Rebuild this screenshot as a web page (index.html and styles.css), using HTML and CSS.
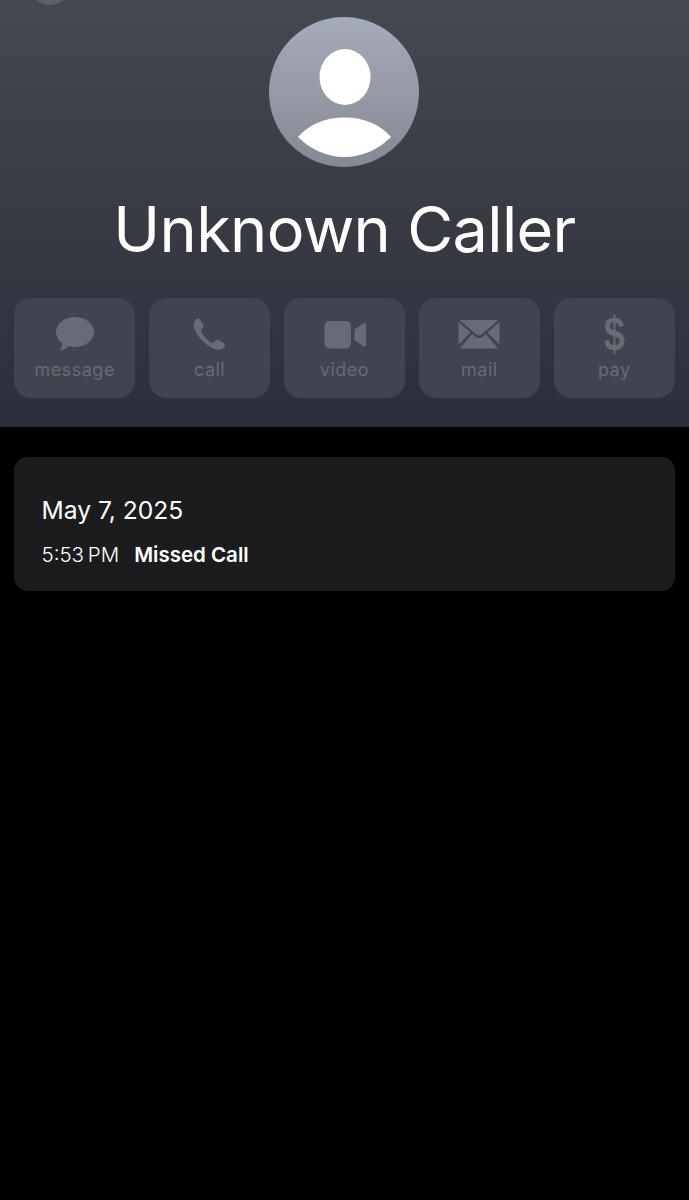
FILE: index.html
```html
<!DOCTYPE html>
<html lang="en">
<head>
  <meta charset="UTF-8">
  <title>Unknown Caller</title>
  <meta name="viewport" content="width=device-width, initial-scale=1.0">
  <link rel="stylesheet" href="styles.css">
</head>
<body>
  <header class="header">
    <div class="back-btn"></div>

    <svg class="avatar" viewBox="0 0 150 150">
      <defs>
        <linearGradient id="avatarFill" x1="0" y1="0" x2="0" y2="1">
          <stop offset="0" stop-color="#a6abba"/>
          <stop offset="1" stop-color="#858992"/>
        </linearGradient>
      </defs>
      <circle cx="75" cy="75" r="75" fill="url(#avatarFill)"/>
      <ellipse cx="76" cy="60" rx="25.500" ry="28" fill="#fff"/>
      <path d="M29 120 C39 108 56 100.500 75.500 100.500 C95 100.500 112 108 122 120 C110 132 94 140 75.500 140 C57 140 41 132 29 120 Z" fill="#fff"/>
    </svg>

    <h1 class="name">Unknown Caller</h1>

    <!-- Botões de ação -->
    <div class="actions">
      <div class="action">
        <svg class="icon" viewBox="0 0 40 36">
          <path d="M20 1 C30.500 1 39 7.700 39 16 C39 24.300 30.500 31 20 31 C17.800 31 15.700 30.700 13.700 30.200 C11.500 32.300 8.500 34 5.500 34.500 C4.700 34.600 4.400 34 4.900 33.400 C6.300 31.800 7.400 29.700 7.600 27.600 C3.600 24.800 1 20.700 1 16 C1 7.700 9.500 1 20 1 Z"/>
        </svg>
        <span class="action-label">message</span>
      </div>
      <div class="action">
        <svg class="icon" viewBox="0 -1.350 43 38.700">
          <path d="M6.500 2.500 C8 1 10 1.200 11 2.700 L14.200 7.800 C15 9.100 14.800 10.500 13.800 11.600 L12.200 13.200 C11.600 13.800 11.600 14.500 12 15.300 C14.400 20.300 18.700 24.900 23.500 27.300 C24.300 27.700 25 27.600 25.600 27 L27.400 25.200 C28.500 24.200 30 24 31.300 24.800 L36.200 27.800 C37.800 28.800 38 30.800 36.800 32.300 C34.800 34.700 32 35.500 29 34.800 C18.500 32.300 7.500 21.500 4.500 11 C3.600 7.800 4.400 4.700 6.500 2.500 Z"/>
        </svg>
        <span class="action-label">call</span>
      </div>
      <div class="action">
        <svg class="icon" viewBox="0 0 40 36">
          <rect x="0.500" y="5" width="26.500" height="27.500" rx="5"/>
          <path d="M30.500 13.500 L39 7.500 C40.300 6.500 42 7 42 8.800 L42 28.700 C42 30.500 40.300 31 39 30 L30.500 24 Z"/>
        </svg>
        <span class="action-label">video</span>
      </div>
      <div class="action">
        <svg class="icon icon-wide" viewBox="0 0 42 36">
          <path d="M1.500 4 L40.500 4 L23.500 18.500 C22 19.800 20 19.800 18.500 18.500 Z"/>
          <path d="M0.500 6 L12.500 16.500 L0.500 28.500 Z"/>
          <path d="M41.500 6 L29.500 16.500 L41.500 28.500 Z"/>
          <path d="M14.200 18 L17 20.400 C19.400 22.400 22.600 22.400 25 20.400 L27.800 18 L40 32.500 L2 32.500 Z"/>
        </svg>
        <span class="action-label">mail</span>
      </div>
      <div class="action">
        <span class="dollar">$</span>
        <span class="action-label">pay</span>
      </div>
    </div>
  </header>

  <section class="call-card">
    <div class="call-date">May 7, 2025</div>
    <div class="call-row">
      <span class="call-time">5:53 PM</span>
      <span class="call-status">Missed Call</span>
    </div>
  </section>
</body>
</html>
```

FILE: styles.css
```css
* {
  box-sizing: border-box;
  margin: 0;
  padding: 0;
}

body {
  font-family: Inter, "Liberation Sans", sans-serif;
  background: #000;
  color: #fff;
}

.header {
  position: relative;
  height: 427px;
  padding: 17px 14px 0;
  background: linear-gradient(#45484f, #2c2e39);
  overflow: hidden;
}

/* Botão voltar, cortado pelo topo da tela */
.back-btn {
  position: absolute;
  left: 28px;
  top: -39px;
  width: 44px;
  height: 44px;
  border-radius: 50%;
  background: #5c6068;
}

.avatar {
  display: block;
  width: 150px;
  height: 150px;
  margin-left: 255px;
}

.name {
  margin-top: 22px;
  font-size: 63px;
  line-height: 80px;
  font-weight: 400;
  text-align: center;
  letter-spacing: -0.650px;
  white-space: nowrap;
}

.actions {
  display: grid;
  grid-template-columns: repeat(5, 121.400px);
  justify-content: space-between;
  margin-top: 29px;
}

.action {
  display: flex;
  flex-direction: column;
  align-items: center;
  height: 100px;
  padding-top: 18px;
  background: #41434f;
  border-radius: 17px;
}

.icon {
  flex: none;
  width: 40px;
  height: 36px;
  fill: #686a75;
  overflow: visible;
}

.icon-wide {
  width: 42px;
}

/* Cifrão mais estreito e alto, como o ícone original */
.dollar {
  height: 36px;
  font-family: "Liberation Sans", sans-serif;
  font-size: 44px;
  line-height: 36px;
  font-weight: 700;
  color: #686a75;
  transform: scale(0.86, 1.08);
}

.action-label {
  margin-top: 6px;
  font-size: 18px;
  line-height: 24px;
  letter-spacing: 0.5px;
  color: #686a75;
}

.call-card {
  height: 134px;
  margin: 30px 14px 0;
  padding: 37px 27.500px 0;
  background: #1c1c1e;
  border-radius: 14px;
}

.call-date {
  font-size: 24.600px;
  line-height: 32px;
}

.call-row {
  display: flex;
  gap: 15px;
  margin-top: 17px;
  line-height: 24px;
}

.call-time {
  font-size: 20.500px;
  font-weight: 300;
  word-spacing: -2px;
}

.call-status {
  font-size: 20.500px;
  font-weight: 600;
}
```
